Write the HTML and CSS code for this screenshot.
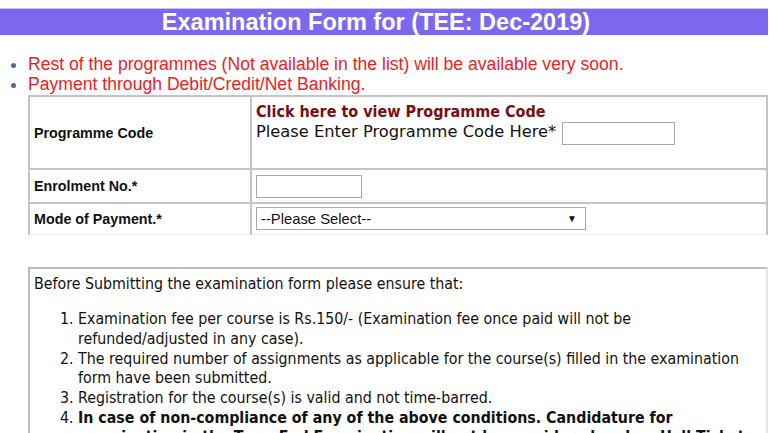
FILE: index.html
```html
<!DOCTYPE html>
<html>
<head>
<meta charset="utf-8">
<link rel="stylesheet" href="styles.css">
</head>
<body>
<div class="page">
  <div class="title">Examination Form for (TEE: Dec-2019)</div>
  <ul class="notes">
    <li>Rest of the programmes (Not available in the list) will be available very soon.</li>
    <li>Payment through Debit/Credit/Net Banking.</li>
  </ul>
  <table class="form">
    <tr class="r1">
      <td class="lbl">Programme Code</td>
      <td class="val">
        <a class="view">Click here to view Programme Code</a><br>
        <span class="enter">Please Enter Programme Code Here*</span> <span class="inp code"></span>
      </td>
    </tr>
    <tr class="r2">
      <td class="lbl">Enrolment No.*</td>
      <td class="val"><span class="inp enrol"></span></td>
    </tr>
    <tr class="r3">
      <td class="lbl">Mode of Payment.*</td>
      <td class="val"><span class="sel"><span>--Please Select--</span><span class="arrow">&#9660;</span></span></td>
    </tr>
  </table>
  <div class="box">
    <p class="intro">Before Submitting the examination form please ensure that:</p>
    <ol class="rules">
      <li>Examination fee per course is Rs.150/- (Examination fee once paid will not be refunded/adjusted in any case).</li>
      <li>The required number of assignments as applicable for the course(s) filled in the examination form have been submitted.</li>
      <li>Registration for the course(s) is valid and not time-barred.</li>
      <li><b>In case of non-compliance of any of the above conditions. Candidature for examination in the Term-End Examination will not be considered and no Hall Ticket will be issued.</b></li>
    </ol>
  </div>
</div>
</body>
</html>
```
FILE: styles.css
```css
html, body { margin: 0; padding: 0; background: #fff; }
body { overflow: hidden; }
.page { width: 768px; padding-top: 8px; }
.title {
  background: #7b68ee;
  color: #fff;
  font-family: "Liberation Sans", Arial, sans-serif;
  font-weight: bold;
  font-size: 23.5px;
  height: 26px;
  line-height: 26px;
  text-align: center;
  padding-right: 16px;
  border-top: 1px solid #c9c0f7;
}
.notes {
  margin: 19px 0 0 0;
  padding-left: 28px;
  font-family: "Liberation Sans", Arial, sans-serif;
  font-size: 17.6px;
  line-height: 20px;
  color: #f0201f;
}
.notes li::marker { color: #4a6a96; }
.form {
  margin: 1px 0 0 28px;
  width: 740px;
  border-collapse: collapse;
  border: 2px solid #bdbdbd;
  border-bottom: none;
}
.form td { border: 2px solid #c4c4c4; padding: 0 4px; box-sizing: border-box; }
.form tr.r3 td { border-bottom: 1px solid #f0f0f0; }
.lbl {
  width: 222px;
  font-family: "Liberation Sans", Arial, sans-serif;
  font-weight: bold;
  font-size: 14.3px;
  color: #111;
}
.r1 td { height: 73px; }
.r1 .val { vertical-align: top; padding-top: 5px; }
.r2 td { height: 34px; }
.r3 td { height: 31px; }
.view {
  font-family: "DejaVu Sans Condensed", "DejaVu Sans", sans-serif;
  font-weight: bold;
  font-size: 16px;
  color: #7a0d12;
  line-height: 19px;
}
.enter {
  font-family: "DejaVu Sans", sans-serif;
  font-size: 16.3px;
  color: #111;
  line-height: 21px;
}
.inp {
  display: inline-block;
  vertical-align: middle;
  border: 1px solid #a9a9a9;
  background: #fff;
  box-sizing: border-box;
  height: 23px;
}
.code { width: 113px; margin-left: 2px; }
.enrol { width: 106px; }
.sel {
  display: flex;
  justify-content: space-between;
  align-items: center;
  box-sizing: border-box;
  width: 330px;
  height: 23px;
  border: 1px solid #a9a9a9;
  padding: 0 8px 0 4px;
  font-family: "Liberation Sans", Arial, sans-serif;
  font-size: 14.8px;
  color: #111;
}
.arrow { font-size: 10px; }
.box {
  margin: 32px 0 0 28px;
  width: 740px;
  box-sizing: border-box;
  border: 2px solid #bdbdbd;
  border-right-color: #e6e6e6;
  padding: 5px 6px 0 4px;
  font-family: "DejaVu Sans Condensed", "DejaVu Sans", sans-serif;
  font-size: 15.8px;
  color: #111;
  line-height: 19.7px;
}
.intro { margin: 0 0 16px 0; }
.rules { margin: 0; padding-left: 44px; }
```
